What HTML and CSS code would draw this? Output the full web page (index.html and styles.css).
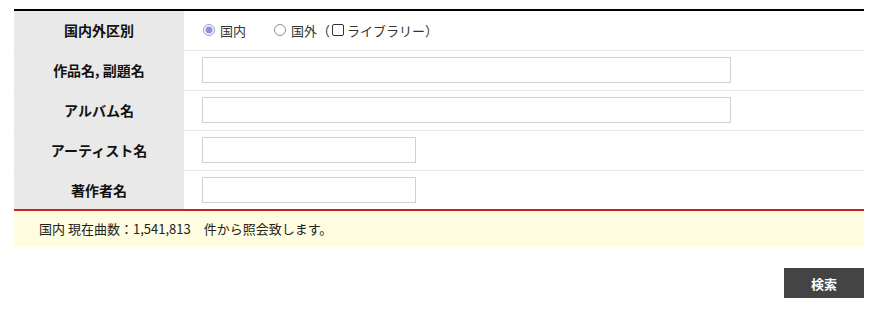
FILE: index.html
```html
<!DOCTYPE html>
<html lang="ja">
<head>
<meta charset="UTF-8">
<title>検索</title>
<link rel="stylesheet" href="styles.css">
</head>
<body>
  <div id="main">
    <table class="search-table">
      <tr>
        <th>国内外区別</th>
        <td>
          <label class="opt"><input type="radio" class="radio" name="area" checked> 国内</label>
          <label class="opt opt-gap"><input type="radio" class="radio" name="area"> 国外（<input type="checkbox" class="chk"> ライブラリー）</label>
        </td>
      </tr>
      <tr>
        <th>作品名, 副題名</th>
        <td><input type="text" class="field field-long"></td>
      </tr>
      <tr>
        <th>アルバム名</th>
        <td><input type="text" class="field field-long"></td>
      </tr>
      <tr>
        <th>アーティスト名</th>
        <td><input type="text" class="field field-short"></td>
      </tr>
      <tr class="last">
        <th>著作者名</th>
        <td><input type="text" class="field field-short"></td>
      </tr>
    </table>

    <div id="notice">国内 現在曲数：1,541,813　件から照会致します。</div>

    <div id="actions">
      <button class="button">検索</button>
    </div>
  </div>
</body>
</html>
```

FILE: styles.css
```css
* {
  margin: 0;
  padding: 0;
  box-sizing: border-box;
}

html, body {
  background: #fff;
  color: #333;
  font-family: "Noto Sans CJK JP", "Noto Sans", sans-serif;
  font-size: 13px;
}

#main {
  margin: 9px 8px 0 14px;
}

.search-table {
  width: 100%;
  border-collapse: collapse;
  border-top: 2px solid #000;
}

.search-table th,
.search-table td {
  height: 40px;
  border-bottom: 1px solid #e6e6e6;
  vertical-align: middle;
}

.search-table tr.last th,
.search-table tr.last td {
  border-bottom: none;
  height: 39px;
}

.search-table th {
  width: 170px;
  background: #e9e9e9;
  color: #111;
  font-size: 14px;
  font-weight: bold;
  text-align: center;
}

.search-table td {
  padding-left: 18px;
}

.opt {
  display: inline-flex;
  align-items: center;
  color: #333;
}

.opt-gap {
  margin-left: 24px;
}

/* 独自のラジオボタン */
.radio {
  appearance: none;
  -webkit-appearance: none;
  width: 12px;
  height: 12px;
  margin: 0 5px 0 1px;
  border: 1px solid #8f8f8f;
  border-radius: 50%;
  background: #fff;
}

.radio:checked {
  border-color: #9a9ad6;
  background: radial-gradient(circle, #8f8fd8 0, #8f8fd8 3px, #d6d6f2 3.5px, #fff 5px);
}

.chk {
  appearance: none;
  -webkit-appearance: none;
  width: 12px;
  height: 12px;
  margin: 0 3px 0 2px;
  border: 1px solid #333;
  border-radius: 2px;
  background: #fff;
}

.field {
  display: block;
  height: 26px;
  border: 1px solid #d0d0d0;
  background: #fff;
  outline: none;
}

.field-long {
  width: 529px;
}

.field-short {
  width: 214px;
}

#notice {
  border-top: 2px solid #cc1f1f;
  background: #fffde0;
  height: 38px;
  padding-left: 25px;
  line-height: 36px;
  color: #222;
}

#actions {
  display: flex;
  justify-content: flex-end;
  margin-top: 21px;
}

.button {
  width: 80px;
  height: 30px;
  background: #444;
  color: #fff;
  border: none;
  font-family: inherit;
  font-size: 13px;
  font-weight: bold;
  cursor: pointer;
}
```
